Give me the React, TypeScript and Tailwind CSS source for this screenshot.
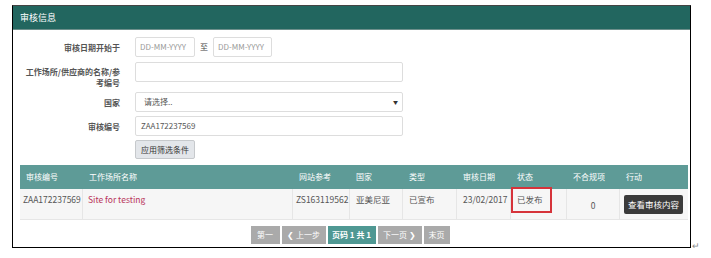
import React from "react";

const font = { fontFamily: '"Noto Sans CJK SC", "Open Sans", sans-serif' };

function Label({ children }: { children: React.ReactNode }) {
  return (
    <div className="w-[107px] shrink-0 text-right text-[8px] leading-[11px] text-[#555] font-bold">
      {children}
    </div>
  );
}

const cols = [
  { t: "审核编号", w: 63 },
  { t: "工作场所名称", w: 210 },
  { t: "网站参考", w: 57 },
  { t: "国家", w: 53 },
  { t: "类型", w: 54 },
  { t: "审核日期", w: 54 },
  { t: "状态", w: 56 },
  { t: "不合规项", w: 53 },
  { t: "行动", w: 68 },
];

export default function App() {
  return (
    <div className="w-[711px] h-[258px] bg-white relative" style={font}>
      <div className="absolute left-[12px] top-[5px] w-[679px] h-[243px] border border-black border-t-[#444] bg-white">
        {/* header */}
        <div className="h-[24px] bg-[#22665f] border-b border-[#6d8f8b] flex items-center pl-[7px] text-white text-[9px]">
          审核信息
        </div>

        {/* form */}
        <div className="flex flex-col text-[8px]">
          <div className="flex items-center mt-[7px] h-[20px]">
            <Label>审核日期开始于</Label>
            <div className="ml-[15px] flex items-center">
              <div className="w-[60px] h-[20px] border border-[#ddd] rounded-[2px] flex items-center pl-[4px] text-[8px] text-[#999]">
                DD-MM-YYYY
              </div>
              <span className="mx-[5px] text-[8px] text-[#444]">至</span>
              <div className="w-[59px] h-[20px] border border-[#ddd] rounded-[2px] flex items-center pl-[4px] text-[8px] text-[#999]">
                DD-MM-YYYY
              </div>
            </div>
          </div>

          <div className="flex items-start mt-[5px]">
            <Label>
              <div className="pt-[4px]">工作场所/供应商的名称/参</div>
              <div>考编号</div>
            </Label>
            <div className="ml-[15px] w-[268px] h-[20px] border border-[#ddd] rounded-[2px]" />
          </div>

          <div className="flex items-center mt-[4px] h-[20px]">
            <Label>国家</Label>
            <div className="ml-[15px] w-[268px] h-[20px] border border-[#ddd] rounded-[2px] flex items-center justify-between pl-[8px] pr-[4px] text-[#555]">
              <span>请选择..</span>
              <span className="text-[5px] text-[#333]">▼</span>
            </div>
          </div>

          <div className="flex items-center mt-[4px] h-[20px]">
            <Label>审核编号</Label>
            <div className="ml-[15px] w-[268px] h-[20px] border border-[#ddd] rounded-[2px] flex items-center pl-[5px] text-[#555]">
              ZAA172237569
            </div>
          </div>

          <div className="flex mt-[4px]">
            <div className="w-[107px] shrink-0" />
            <div className="ml-[15px] w-[60px] h-[19px] bg-[#e3e6ea] border border-[#c6c9cc] rounded-[2px] flex items-center justify-center text-[#333]">
              应用筛选条件
            </div>
          </div>
        </div>

        {/* table */}
        <div className="ml-[7px] mt-[6px] w-[668px] text-[8px] relative">
          <div className="flex h-[24px] bg-[#5e9b97] text-white">
            {cols.map((c) => (
              <div key={c.t} style={{ width: c.w }} className="shrink-0 flex items-center pl-[6px]">
                {c.t}
              </div>
            ))}
          </div>
          <div className="flex h-[31px] bg-[#f6f6f6] text-[#555] border-b border-[#e6e6e6] text-[8.5px]">
            <div className="w-[63px] shrink-0 pl-[3px] pt-[4px] border-r border-[#e6e6e6]">ZAA172237569</div>
            <div className="w-[210px] shrink-0 pl-[5px] pt-[4px] text-[#b8335a] border-r border-[#e6e6e6]">Site for testing</div>
            <div className="w-[57px] shrink-0 pl-[3px] pt-[4px] border-r border-[#e6e6e6]">ZS163119562</div>
            <div className="w-[53px] shrink-0 pl-[6px] pt-[4px] border-r border-[#e6e6e6]">亚美尼亚</div>
            <div className="w-[54px] shrink-0 pl-[6px] pt-[4px] border-r border-[#e6e6e6]">已宣布</div>
            <div className="w-[54px] shrink-0 pl-[6px] pt-[4px] border-r border-[#e6e6e6]">23/02/2017</div>
            <div className="w-[56px] shrink-0 pl-[6px] pt-[4px] border-r border-[#e6e6e6]">已发布</div>
            <div className="w-[53px] shrink-0 flex items-center justify-center pt-[2px] border-r border-[#e6e6e6]">0</div>
            <div className="w-[68px] shrink-0 flex items-center pl-[4px]">
              <div className="w-[59px] h-[19px] bg-[#3a3a3a] text-white flex items-center justify-center rounded-[2px]">
                查看审核内容
              </div>
            </div>
          </div>
          {/* red annotation box */}
          <div className="absolute left-[491px] top-[22px] w-[41px] h-[26px] border-2 border-[#d6333a]" />
        </div>

        {/* pagination */}
        <div className="flex justify-center mt-[6px] text-[8px] text-white">
          <div className="flex gap-[2px] ml-[-3px]">
            <div className="w-[29px] h-[18px] bg-[#aaa] flex items-center justify-center">第一</div>
            <div className="w-[44px] h-[18px] bg-[#aaa] flex items-center justify-center">❮ 上一步</div>
            <div className="w-[48px] h-[18px] bg-[#4f9893] flex items-center justify-center font-bold">页码 1 共 1</div>
            <div className="w-[44px] h-[18px] bg-[#aaa] flex items-center justify-center">下一页 ❯</div>
            <div className="w-[26px] h-[18px] bg-[#aaa] flex items-center justify-center">末页</div>
          </div>
        </div>
      </div>
      <div className="absolute left-[692px] top-[239px] text-[9px] text-[#888]">↵</div>
    </div>
  );
}
